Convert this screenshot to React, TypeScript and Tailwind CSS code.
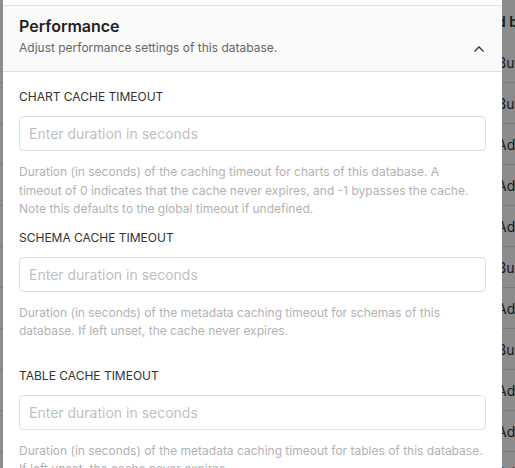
import React from 'react';

const rows = ['Built-in', 'Built-in', 'Admin', 'Admin', 'Admin', 'Built-in', 'Admin', 'Built-in', 'Admin', 'Admin', 'Admin'];

interface FieldProps {
  label: string;
  help: string;
  className?: string;
}

const Field: React.FC<FieldProps> = ({ label, help, className }) => (
  <div className={className}>
    <label className="block text-[12px] leading-[18px] text-[#323232] mb-[10px]">{label}</label>
    <input
      type="text"
      placeholder="Enter duration in seconds"
      className="block w-full h-[35px] px-[9px] border border-[#e0e0e0] rounded-[4px] text-[14px] text-[#323232] placeholder:text-[#bfbfbf] focus:outline-none"
    />
    <p className="mt-[12px] text-[12px] leading-[18.5px] text-[#b2b2b2]">{help}</p>
  </div>
);

const App: React.FC = () => {
  return (
    <div className="relative w-full h-[468px] overflow-hidden bg-white font-['Inter',sans-serif]">
      {/* table behind the modal */}
      <div className="h-[42px] flex items-center pl-[452px] text-[14px] font-semibold text-[#323232] whitespace-nowrap">
        Created by
      </div>
      {rows.map((r, i) => (
        <div
          key={i}
          className="h-[41px] flex items-center pl-[497px] border-b border-[#e0e0e0] text-[14px] text-[#323232] whitespace-nowrap"
        >
          {r}
        </div>
      ))}

      <div className="absolute inset-0 bg-black/45" />

      {/* modal */}
      <div className="absolute left-[3px] top-0 w-[499px] h-full bg-white overflow-hidden">
        <div className="h-[5px]" />
        <div className="border-y border-[#e0e0e0] bg-[#fafafa] px-4 pt-[9px] pb-[12px] flex items-end justify-between">
          <div>
            <h4 className="text-[16px] leading-[22px] font-semibold text-[#1f1f1f]">Performance</h4>
            <p className="text-[12px] leading-[22px] text-[#666666]">Adjust performance settings of this database.</p>
          </div>
          <svg width="12" height="8" viewBox="0 0 12 8" className="mb-[6px] mr-[1px]" fill="none">
            <path d="M1.5 6.5 L6 2 L10.5 6.5" stroke="#323232" strokeWidth="1.3" />
          </svg>
        </div>
        <div className="px-4 pt-[16px]">
          <Field
            label="CHART CACHE TIMEOUT"
            help={'Duration (in seconds) of the caching timeout for charts of this database. A timeout\u00a0of 0 indicates that the cache never expires, and -1 bypasses the cache. Note this defaults to the global timeout if undefined.'}
          />
          <Field
            className="mt-[10px]"
            label="SCHEMA CACHE TIMEOUT"
            help="Duration (in seconds) of the metadata caching timeout for schemas of this database. If left unset, the cache never expires."
          />
          <Field
            className="mt-[26px]"
            label="TABLE CACHE TIMEOUT"
            help="Duration (in seconds) of the metadata caching timeout for tables of this database. If left unset, the cache never expires."
          />
        </div>
      </div>
    </div>
  );
};

export default App;
